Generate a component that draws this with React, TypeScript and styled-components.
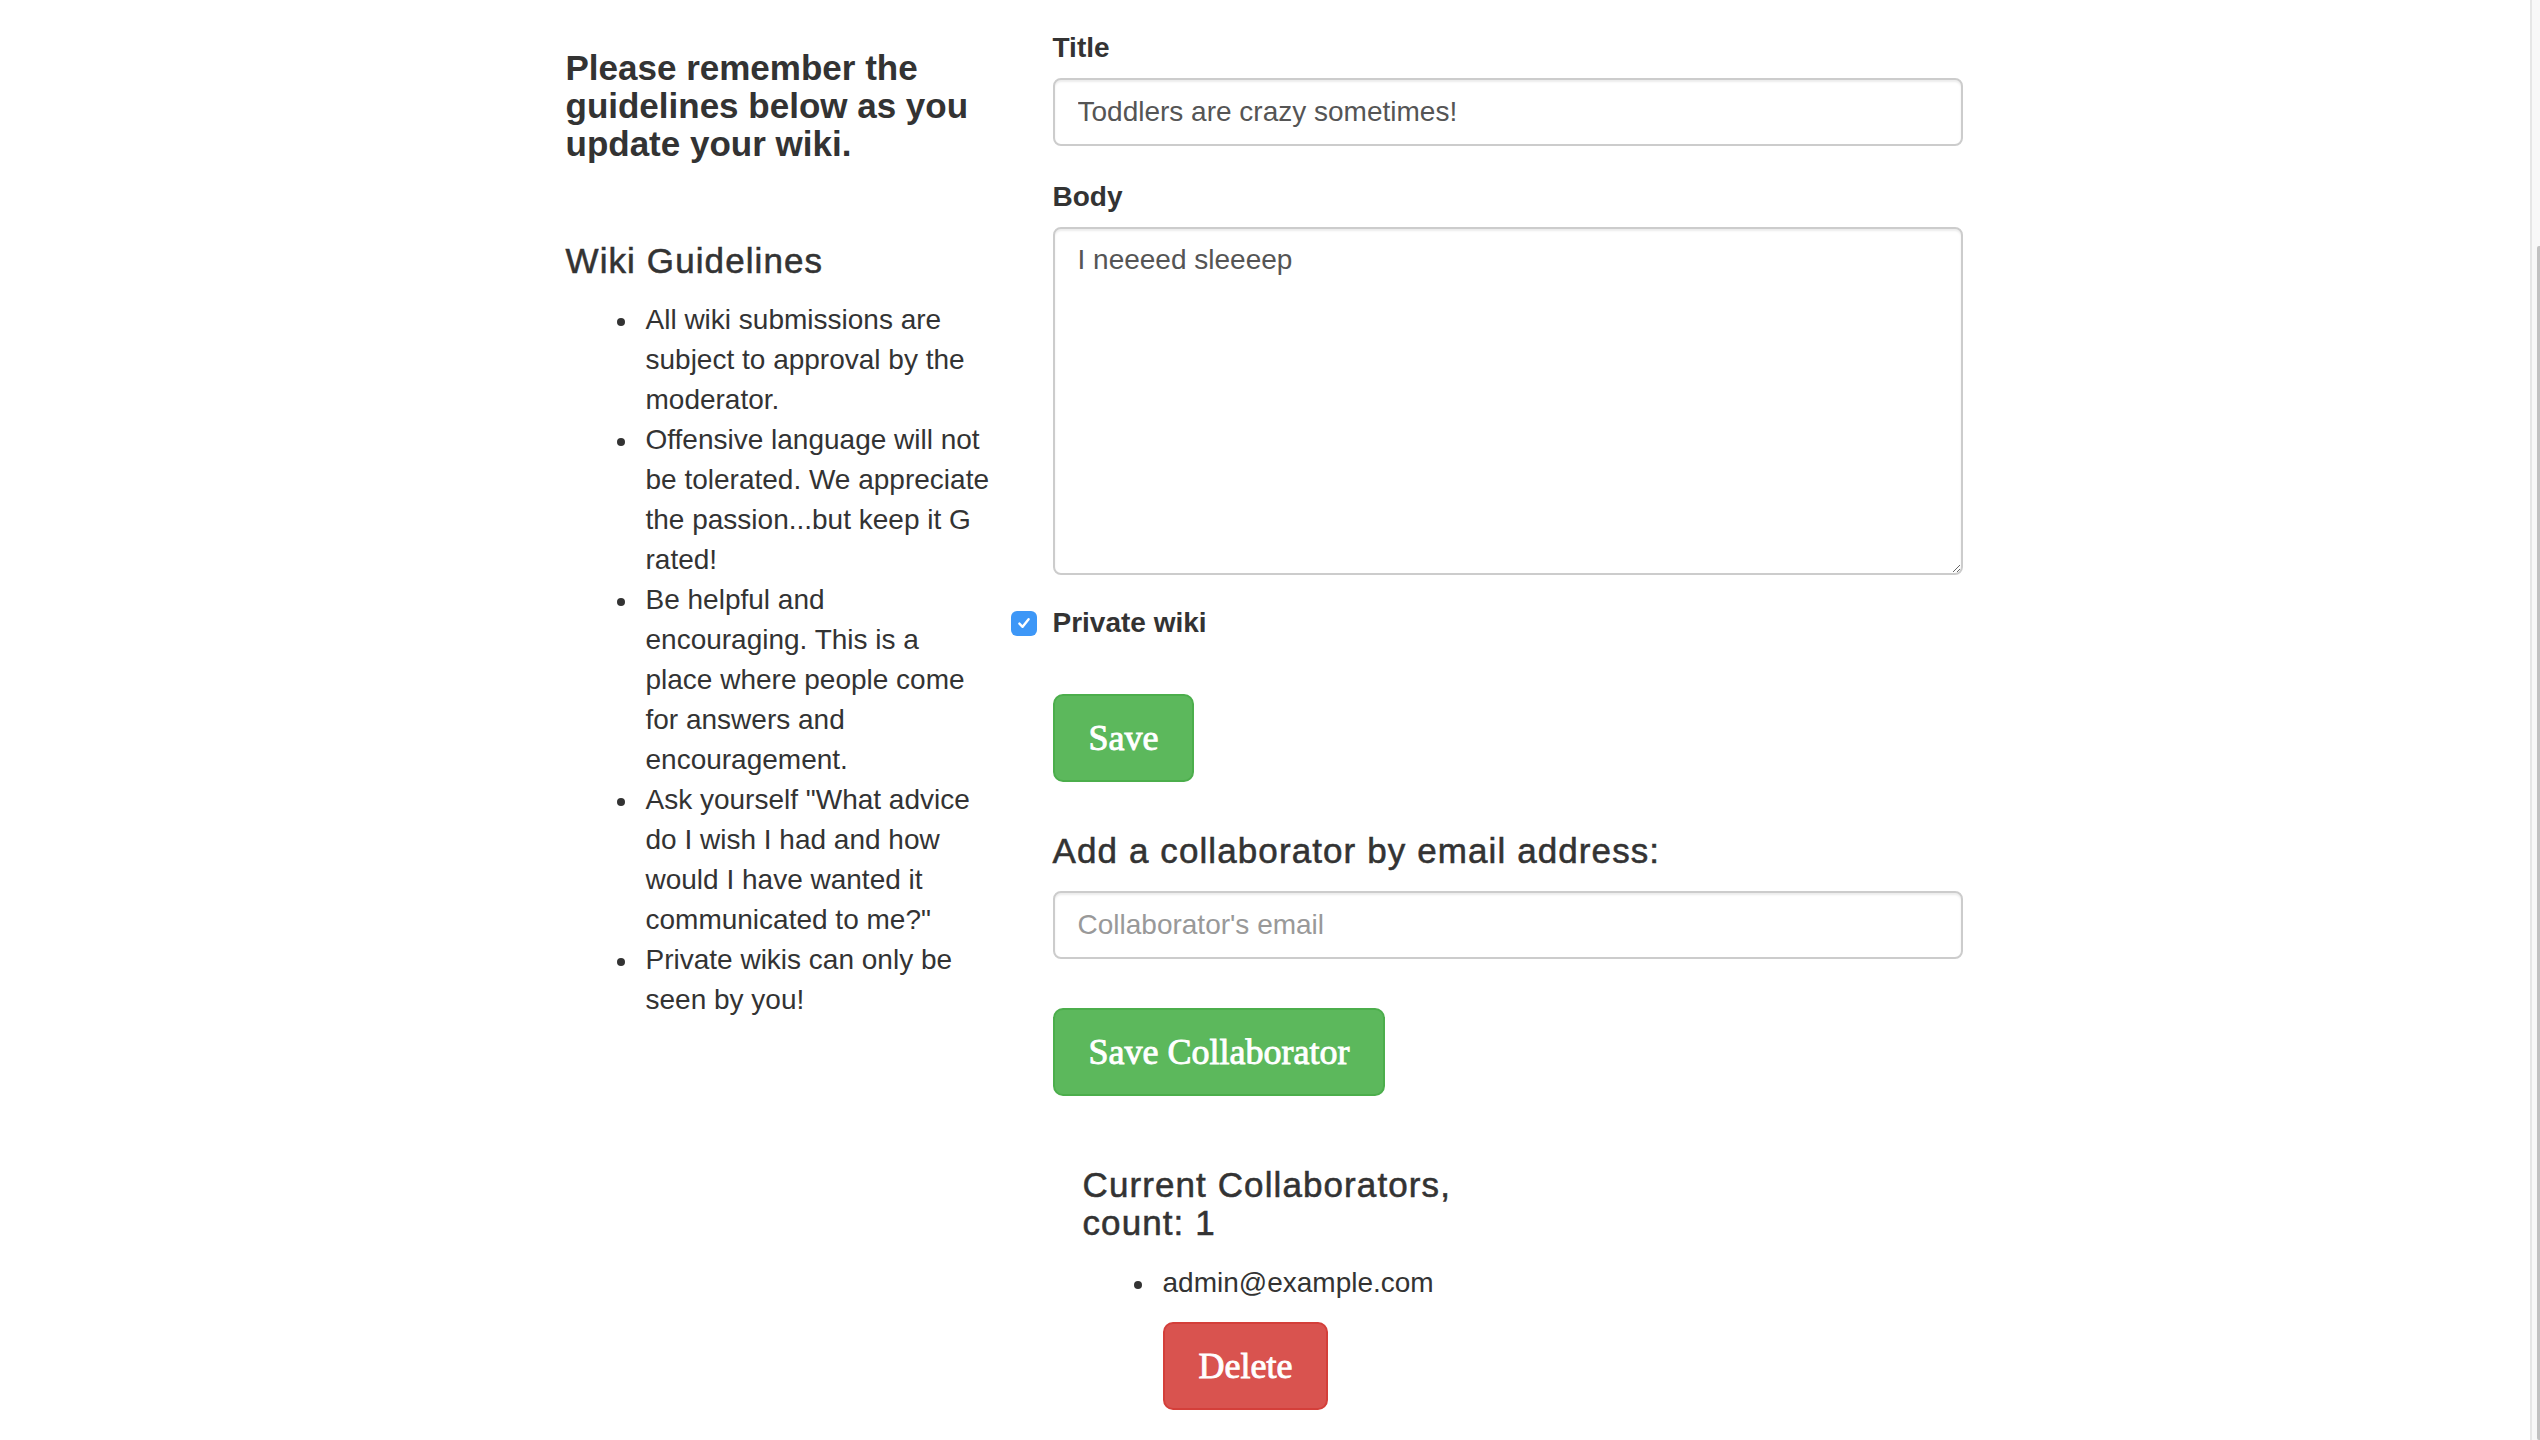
import React from "react";
import styled, { createGlobalStyle } from "styled-components";

const GlobalStyle = createGlobalStyle`
  * { box-sizing: border-box; }
  html, body {
    margin: 0;
    padding: 0;
    background: #ffffff;
    overflow: hidden;
  }
  body {
    font-family: "Liberation Sans", Arial, Helvetica, sans-serif;
    font-size: 28px;
    line-height: 40px;
    color: #333333;
  }
`;

const Page = styled.div`
  width: 2528px;
  min-height: 1440px;
`;

const Container = styled.div`
  width: 1397px;
  margin: 0 auto;
  display: flex;
  align-items: flex-start;
  gap: 61px;
`;

const Sidebar = styled.aside`
  flex: none;
  width: 426px;
`;

const Main = styled.main`
  flex: none;
  width: 910px;
`;

const Heading = styled.h4<{ $strong?: boolean; $mt: number }>`
  margin: ${(p) => p.$mt}px 0 0;
  font-size: 35px;
  line-height: 38px;
  color: #333333;
  font-weight: ${(p) => (p.$strong ? 700 : 400)};
  letter-spacing: ${(p) => (p.$strong ? 0 : 1.1)}px;
  -webkit-text-stroke: ${(p) => (p.$strong ? 0 : 0.55)}px #333333;
`;

const BulletList = styled.ul<{ $mt: number }>`
  margin: ${(p) => p.$mt}px 0 0;
  padding-left: 80px;
  list-style: none;
`;

const Item = styled.li`
  position: relative;
  font-size: 28px;
  line-height: 40px;

  &::before {
    content: "";
    position: absolute;
    left: -29px;
    top: 18px;
    width: 8px;
    height: 8px;
    border-radius: 50%;
    background: #333333;
  }
`;

const Form = styled.form`
  display: flex;
  flex-direction: column;
  align-items: flex-start;
`;

const FieldLabel = styled.label<{ $mt: number }>`
  display: block;
  margin: ${(p) => p.$mt}px 0 10px;
  font-weight: 700;
  font-size: 28px;
  line-height: 40px;
`;

const fieldBase = `
  display: block;
  width: 910px;
  border: 2px solid #cccccc;
  border-radius: 8px;
  background: #ffffff;
  font-family: "Liberation Sans", Arial, Helvetica, sans-serif;
  font-size: 28px;
  line-height: 40px;
  color: #555555;
  box-shadow: inset 0 2px 2px rgba(0, 0, 0, 0.075);
  outline: none;
  &::placeholder { color: #999999; }
`;

const TextInput = styled.input<{ $mt?: number }>`
  ${fieldBase}
  height: 68px;
  padding: 0 23px;
  margin-top: ${(p) => p.$mt ?? 0}px;
`;

const TextArea = styled.textarea`
  ${fieldBase}
  height: 348px;
  padding: 11px 23px;
  resize: vertical;
`;

const CheckRow = styled.label`
  display: flex;
  align-items: center;
  gap: 16px;
  margin: 28px 0 0 -42px;
  font-weight: 700;
  font-size: 28px;
  line-height: 40px;
`;

const CheckBox = styled.span`
  display: flex;
  align-items: center;
  justify-content: center;
  width: 26px;
  height: 25px;
  border-radius: 6px;
  background: #3d97f7;
`;

const Button = styled.button<{ $variant: "success" | "danger"; $mt: number }>`
  display: block;
  margin-top: ${(p) => p.$mt}px;
  height: 88px;
  padding: 0 34px;
  border-radius: 10px;
  border: 2px solid ${(p) => (p.$variant === "success" ? "#4cae4c" : "#d43f3a")};
  background: ${(p) => (p.$variant === "success" ? "#5cb85c" : "#d9534f")};
  color: #ffffff;
  font-family: "Liberation Serif", "Times New Roman", serif;
  font-size: 36px;
  line-height: 1;
  -webkit-text-stroke: 0.9px #ffffff;
  cursor: pointer;
`;

const Collaborators = styled.section`
  width: 430px;
  padding-left: 30px;
  margin-top: 70px;
`;

const Scrollbar = styled.div`
  position: fixed;
  top: 0;
  right: 0;
  width: 10px;
  height: 100vh;
  background: #f8f8f8;
  border-left: 2px solid #e6e6e6;
`;

const Thumb = styled.div`
  position: absolute;
  top: 246px;
  right: 0;
  bottom: 0;
  width: 3px;
  border-radius: 2px 0 0 2px;
  background: #c1c1c1;
`;

const guidelines = [
  "All wiki submissions are subject to approval by the moderator.",
  "Offensive language will not be tolerated. We appreciate the passion...but keep it G rated!",
  "Be helpful and encouraging. This is a place where people come for answers and encouragement.",
  'Ask yourself "What advice do I wish I had and how would I have wanted it communicated to me?"',
  "Private wikis can only be seen by you!",
];

export default function App() {
  return (
    <>
      <GlobalStyle />
      <Page>
        <Container>
          <Sidebar>
            <Heading $strong $mt={49}>
              Please remember the guidelines below as you update your wiki.
            </Heading>
            <Heading $mt={79}>Wiki Guidelines</Heading>
            <BulletList $mt={20}>
              {guidelines.map((g) => (
                <Item key={g}>{g}</Item>
              ))}
            </BulletList>
          </Sidebar>
          <Main>
            <Form onSubmit={(e) => e.preventDefault()}>
              <FieldLabel $mt={28} htmlFor="wiki-title">
                Title
              </FieldLabel>
              <TextInput id="wiki-title" defaultValue="Toddlers are crazy sometimes!" />
              <FieldLabel $mt={31} htmlFor="wiki-body">
                Body
              </FieldLabel>
              <TextArea id="wiki-body" defaultValue="I neeeed sleeeep" />
              <CheckRow>
                <CheckBox>
                  <svg width="16" height="16" viewBox="0 0 16 16" fill="none">
                    <path
                      d="M3.4 8.6 L6.6 11.8 L12.6 4.2"
                      stroke="#ffffff"
                      strokeWidth="2.4"
                      strokeLinecap="round"
                      strokeLinejoin="round"
                    />
                  </svg>
                </CheckBox>
                Private wiki
              </CheckRow>
              <Button type="submit" $variant="success" $mt={51}>
                Save
              </Button>
            </Form>

            <Form onSubmit={(e) => e.preventDefault()}>
              <Heading $mt={50}>Add a collaborator by email address:</Heading>
              <TextInput $mt={21} placeholder="Collaborator's email" />
              <Button type="submit" $variant="success" $mt={49}>
                Save Collaborator
              </Button>
            </Form>

            <Collaborators>
              <Heading $mt={0}>Current Collaborators, count: 1</Heading>
              <BulletList $mt={21}>
                <Item>
                  admin@example.com
                  <Button type="button" $variant="danger" $mt={19}>
                    Delete
                  </Button>
                </Item>
              </BulletList>
            </Collaborators>
          </Main>
        </Container>
        <Scrollbar>
          <Thumb />
        </Scrollbar>
      </Page>
    </>
  );
}
